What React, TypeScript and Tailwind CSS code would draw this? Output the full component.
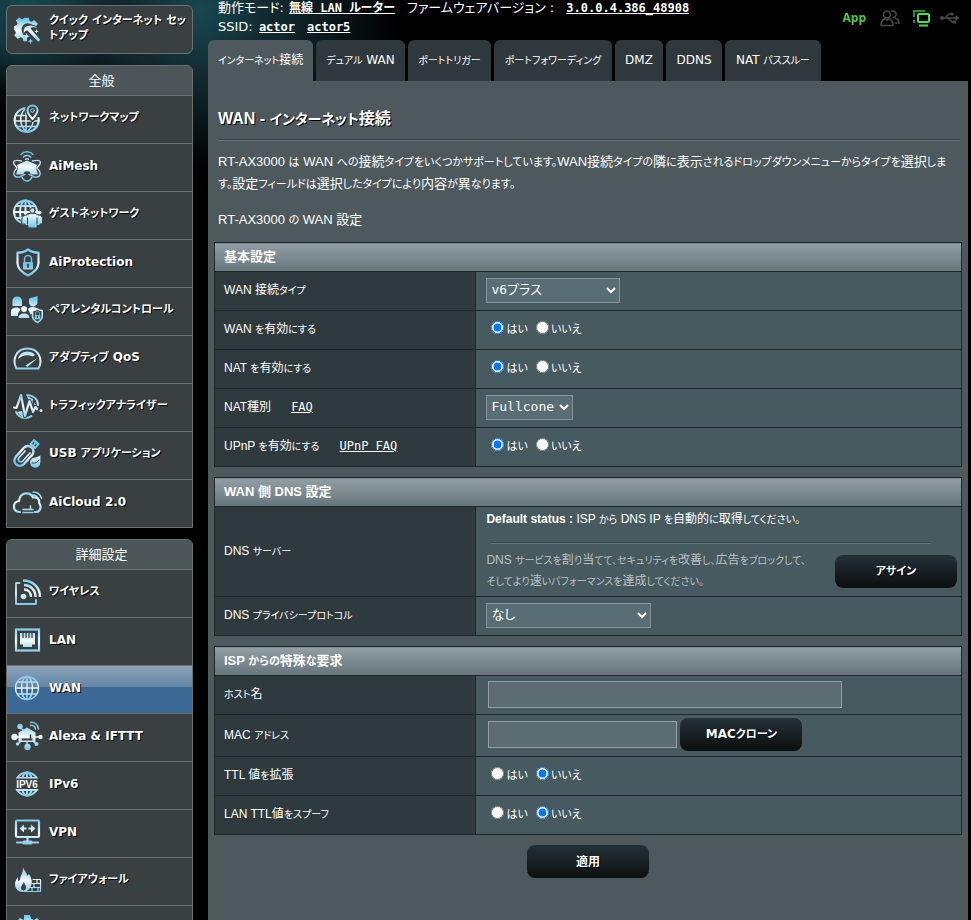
import type { ReactNode } from "react";

const SANS = "font-['Liberation_Sans','Noto_Sans_CJK_JP',sans-serif]";
const VERDANA = "font-['DejaVu_Sans','Noto_Sans_CJK_JP',sans-serif]";
const MONO = "font-['DejaVu_Sans_Mono','Noto_Sans_CJK_JP',monospace]";

// Kana are set one step smaller than the kanji and latin around them
function Ja({ children, size = "text-[11px]" }: { children: string; size?: string }) {
  return (
    <>
      {children.split(/([\u3001\u3002\u3040-\u30ff]+)/).map((part, i) =>
        i % 2 ? (
          <span key={i} className={size}>
            {part}
          </span>
        ) : (
          part
        )
      )}
    </>
  );
}

/* ---------- icons ---------- */

function Icon({ children }: { children: ReactNode }) {
  return (
    <svg
      viewBox="0 0 32 32"
      className="size-8 shrink-0"
      fill="none"
      stroke="url(#ice)"
      strokeWidth="1.6"
      strokeLinecap="round"
      strokeLinejoin="round"
      aria-hidden="true"
    >
      {children}
    </svg>
  );
}

const FILL = { fill: "url(#ice)", stroke: "none" };
const BG = "#3a4042";

const GEAR =
  "M11 2h5.500l.8 3.500 2.200 1 3-2 4 4-2 3-3.500-.5a7 7 0 1 0-8.500 10.500l2 2.500v4h-4l-1-3.500-2.300-1-3 2-4-4 2-3-1-2.200L0 15.500V11l3-.8 1-2.200-2-3L5.500 1.500 8.500 3.500 10.300 3z";

function GearWand() {
  return (
    <Icon>
      <g transform="translate(3 2) scale(.9)">
        <path d={GEAR} {...FILL} />
        <path d="M11.500 12c4-3 11-3.500 17.500 3-4.500-2-7.500-2.500-10-1.500L30 26.500 27 29.500 14.500 16.500c-1.500.5-2.500 1.500-4 4-1-4 0-6.500 1-8.500z" {...FILL} stroke={BG} strokeWidth="1.200" />
        <path d="M14 19l1 2.500 2.500 1-2.500 1-1 2.500-1-2.500-2.500-1 2.500-1zM18.500 25l.9 2 2.100 1-2.100 1-.9 2-.9-2-2.100-1 2.100-1zM25 14.500l.7 1.800 1.800.7-1.800.7-.7 1.800-.7-1.800-1.800-.7 1.800-.7z" {...FILL} />
      </g>
    </Icon>
  );
}

function Globe({ bold = false }: { bold?: boolean }) {
  return (
    <g strokeWidth={bold ? 2 : 1.4}>
      <circle cx="16" cy="16" r="11.500" />
      <ellipse cx="16" cy="16" rx="5.500" ry="11.500" />
      <path d="M16 4.500v23M4.500 16h23M6.500 10h19M6.500 22h19" />
    </g>
  );
}

function MapIcon() {
  return (
    <Icon>
      <path d="M16 6A12 12 0 1 0 27.500 16" strokeWidth="2.200" />
      <path d="M14 7c-6 6-6 16 1.500 23 4-3 6.500-6 6.500-11M5 13.500h12M4 19h24M6 24.500h20M15 7v23" strokeWidth="1.500" />
      <path d="M21.500 18c-4-5-5.500-7-5.500-9.500a5.500 5.500 0 0 1 11 0c0 2.500-1.500 4.500-5.500 9.500z" fill={BG} stroke={BG} strokeWidth="4" />
      <path d="M21.500 17c-4-4.500-5-6-5-8.500a5 5 0 0 1 10 0c0 2.500-1 4-5 8.500z" fill={BG} strokeWidth="2" />
      <circle cx="21.500" cy="8.500" r="1.800" fill={BG} strokeWidth="1" />
    </Icon>
  );
}

function MeshIcon() {
  return (
    <Icon>
      <path d="M16 10.500l10 4.500-1 3 2 6.500h-7.500c.5-4.500-7.500-4.500-7 0H5L7 18l-1-3z" {...FILL} />
      <path d="M10 4.500c3.300-3.600 8.700-3.600 12 0M12.300 7c2.200-2.200 5.200-2.200 7.400 0M14.500 9.300c1-.8 2-.8 3 0" strokeWidth="1.400" />
      <path d="M10.500 11C5 9.500 1.500 10.500 3 14l3 4c-5 5-4 10 3 9M21.500 11c5.500-1.500 9-.5 7.500 3l-3 4c5 5 4 10-3 9M9 26.500l5-2M23 26.500l-5-2" strokeWidth="1.300" />
      <path d="M11 27c1 2.500 3 4 5 4s4-1.500 5-4" strokeWidth="1.500" />
    </Icon>
  );
}

function GuestIcon() {
  return (
    <Icon>
      <g transform="translate(-1.500 -2)">
        <Globe bold />
      </g>
      <path d="M11 21c0-3 2-4 5-4 1-1 3-1.500 5.500-1.500S26 16 27 17c3 0 4.500 1 4.500 4v5H29v1.500h-3V30h-9v-2.500h-3V26h-3z" {...FILL} stroke={BG} strokeWidth="1" />
      <circle cx="14.500" cy="14.500" r="2" {...FILL} />
      <circle cx="21.500" cy="12.500" r="2.700" {...FILL} stroke={BG} strokeWidth="1" />
      <circle cx="28.500" cy="14.500" r="2" {...FILL} />
      <path d="M16.500 20v6M26 20v6" stroke={BG} strokeWidth="1" />
    </Icon>
  );
}

function Lock({ x, y, s = 1 }: { x: number; y: number; s?: number }) {
  return (
    <g transform={`translate(${x} ${y}) scale(${s})`}>
      <path d="M-3.500 0v-3a3.500 3.500 0 0 1 7 0v3" strokeWidth="1.500" />
      <rect x="-5" y="0" width="10" height="7.500" rx="1" {...FILL} />
      <path d="M0 2.500v2.500" stroke={BG} strokeWidth="1.800" />
    </g>
  );
}

function ShieldIcon() {
  return (
    <Icon>
      <path d="M17 3.500c3 2.200 6.500 3.200 10.500 3.200V17c0 6-4.500 9.500-10.500 12.500C11 26.500 6.500 23 6.500 17V6.700C10.500 6.700 14 5.700 17 3.500z" strokeWidth="2.200" />
      <Lock x={17} y={16} />
    </Icon>
  );
}

function FamilyIcon() {
  return (
    <Icon>
      <path d="M1.500 12V7c0-3 2-4.500 4.700-4.500S11 4 11 7v5zM18 4.500l8.500-2.500v5.500a4.400 4.400 0 0 1-8.500 2z" {...FILL} />
      <path d="M0 22v-5c0-2 2-3.500 5-3.500 2 0 4 .5 4.500 2L7 19.500V22zM17 15c1-1.500 3-2 5-2 3 0 5 1.500 5.500 3.500l-8 4z" {...FILL} />
      <circle cx="13" cy="15" r="3" {...FILL} />
      <path d="M7.500 24c0-3 2-4.500 5.500-4.500s5.500 1.500 5.500 4.500z" {...FILL} />
      <path d="M26.500 15c1.500 1.200 3 1.600 4.800 1.600V22c0 3-2.300 5-4.800 6.500-2.800-1.500-5-3.500-5-6.500v-5.400c1.500 0 3.500-.4 5-1.600z" fill={BG} />
      <Lock x={26.5} y={21} s={0.55} />
    </Icon>
  );
}

function GaugeIcon() {
  return (
    <Icon>
      <path d="M5.500 26.500c-5-9 0-20 11-20s16 11 11 20z" strokeWidth="2" />
      <path d="M7 17c1-4.500 4.500-7.500 9.500-7.500 3.500 0 6 1.500 7.500 3.500L21.500 14.500c-5-2.500-10-1.500-14.500 2.500z" {...FILL} />
      <path d="M14.500 23.500L26.500 16 16.500 25z" {...FILL} />
    </Icon>
  );
}

function TrafficIcon() {
  return (
    <Icon>
      <path d="M16 5c7 .5 11 4.500 11 10M5 22c1.500 3.500 5 6 9 6 3 0 5-.8 6.500-2" strokeWidth="1.800" />
      <path d="M16 6l6 3-1 6-3-3zM6 22l5-1 4 5-3 2zM23 12l3 5-2 2z" {...FILL} />
      <path d="M3 17.500l2.500.5 4.500-13 4 21 4.500-15 3.500 11 2.500-5 1.500 2" stroke={BG} strokeWidth="4" />
      <path d="M3 17.500l2.500.5 4.500-13 4 21 4.500-15 3.500 11 2.500-5 1.500 2" strokeWidth="2.200" />
      <circle cx="30" cy="20.500" r="1.500" {...FILL} />
    </Icon>
  );
}

function UsbStickIcon() {
  return (
    <Icon>
      <g transform="rotate(42 16 16)">
        <rect x="9.500" y="8" width="11" height="23" rx="5.500" strokeWidth="2.400" />
        <rect x="11" y="0" width="8" height="7" {...FILL} />
        <path d="M13.500 3v1.500M16.500 3v1.500" stroke={BG} strokeWidth="1.300" />
        <path d="M17.500 13v11c0 3.500-5 3.500-5 0v-9" strokeWidth="1.600" />
      </g>
      <path d="M30 16v8a5.800 5.800 0 1 1-9.500-4c3.500-1 7-1.500 9.500-4z" {...FILL} stroke={BG} strokeWidth="1.200" />
      <path d="M21 25c3.500.5 5.500-.5 7-3" stroke={BG} strokeWidth="1" />
    </Icon>
  );
}

function CloudIcon() {
  return (
    <Icon>
      <path d="M9 26H8c-7-1-6.500-10.500 0-11C9 6 19 5 22 11.500c4-1 7 2 6 5.500 3 3 1.500 9-3 9h-1" strokeWidth="2.200" />
      <path d="M12 23.500h10M12 26.500h10M19.500 20v3" strokeWidth="1.500" />
      <path d="M21 9c3 0 5.500 1.500 6.500 4.500M22 6c4 0 7 2 8.500 6" strokeWidth="1.500" />
    </Icon>
  );
}

function WifiIcon() {
  return (
    <Icon>
      <path d="M8.500 7H5v21h20v-4" strokeWidth="1.800" />
      <circle cx="12.500" cy="20.500" r="2.800" {...FILL} />
      <path d="M13 13.500c4 0 7 3 7 7.500M13 9c6.500 0 11.500 5 11.500 12M12 4.500c10 0 17 7 17 16.500" strokeWidth="2.400" strokeLinecap="butt" />
    </Icon>
  );
}

function LanIcon() {
  return (
    <Icon>
      <rect x="5" y="5.500" width="23" height="21" strokeWidth="2.200" strokeLinejoin="miter" />
      <path d="M9 9h15v11.500h-3V23h-9v-2.500H9z" {...FILL} />
      <path d="M12 8.500v5.500M15 8.500v5.500M18 8.500v5.500M21 8.500v5.500" stroke={BG} strokeWidth="1.300" strokeLinecap="butt" />
    </Icon>
  );
}

function AlexaIcon() {
  return (
    <Icon>
      <path d="M16 7.500l8.500 5V22h-17v-9.500z" {...FILL} />
      <path d="M10.500 18.500h11v2h-11z" fill={BG} stroke="none" />
      <path d="M19.500 15v4" stroke={BG} />
      <path d="M4 17h4M24 17h5M10 8l3 3M8 23l2-2M24 23l-2-2M16 22v4" strokeWidth="1.400" />
      <circle cx="3.500" cy="17" r="3.200" {...FILL} />
      <circle cx="29.500" cy="17" r="2.200" {...FILL} />
      <circle cx="9" cy="6.500" r="2.700" {...FILL} />
      <circle cx="6.500" cy="24" r="1.700" {...FILL} />
      <circle cx="25.500" cy="24" r="2" {...FILL} />
      <circle cx="16.500" cy="27" r="3.200" {...FILL} />
      <path d="M19.500 2.500c4-1 7.500 2 8 6.500M19.500 5.500c2.500-.5 4.500 1 5 3.500" strokeWidth="1.400" />
    </Icon>
  );
}

function Ipv6Icon() {
  return (
    <Icon>
      <Globe bold />
      <rect x="2" y="10.500" width="28" height="10.500" fill={BG} stroke="none" />
      <text
        x="16"
        y="19.500"
        textAnchor="middle"
        fontSize="10"
        fontWeight="700"
        stroke="none"
        fill="#f2f9fc"
        className="font-['Liberation_Sans',sans-serif] [text-shadow:none]"
      >
        IPV6
      </text>
    </Icon>
  );
}

function VpnIcon() {
  return (
    <Icon>
      <rect x="5" y="4.500" width="23" height="16.500" rx="1" strokeWidth="2.200" />
      <path d="M8.500 12.500l4.500-4v3h2.500v2H13v3zM24.500 12.500l-4.500-4v3h-2.500v2H20v3z" {...FILL} />
      <path d="M16.500 21v4M6 26.500h21" strokeWidth="2.200" />
      <rect x="11.500" y="24.500" width="10" height="4" rx="1.500" {...FILL} />
    </Icon>
  );
}

function FireIcon() {
  return (
    <Icon>
      <path d="M12 3c1 4 4 5 4 9l2-2c3 5 3.500 9 2 12-1.500 3.500-4 6-8 6-5 0-8-3.500-8-8 0-3 1.500-5 3-7v4l2-1c0-4 3-6 3-13z" {...FILL} />
      <path d="M12.500 17.500c2.500 3 3 4.500 3 6.500a3 3 0 0 1-6 0c0-2.500 2-3 3-6.500z" fill={BG} stroke="#e4f3fa" strokeWidth=".8" />
      <path d="M22 15.500h7.500V27.500H11M21 19.500h8.500M19 23.500h10.500M26 15.500v4M23 19.500v4M27 23.500v4M21 23.500v4" strokeWidth="1.200" />
    </Icon>
  );
}

function GearIcon() {
  return (
    <Icon>
      <path d="M13 3h6l1 3.500 3 1.500 3-2 4 4-2 3 1.500 3 3 1v6H3v-6l3-1 1-3-2-3 4-4 3.500 2L13 6.500z" {...FILL} />
    </Icon>
  );
}

/* ---------- sidebar ---------- */

type MenuItem = { label: string; icon: ReactNode; active?: boolean };

const general: MenuItem[] = [
  { label: "ネットワークマップ", icon: <MapIcon /> },
  { label: "AiMesh", icon: <MeshIcon /> },
  { label: "ゲストネットワーク", icon: <GuestIcon /> },
  { label: "AiProtection", icon: <ShieldIcon /> },
  { label: "ペアレンタルコントロール", icon: <FamilyIcon /> },
  { label: "アダプティブ QoS", icon: <GaugeIcon /> },
  { label: "トラフィックアナライザー", icon: <TrafficIcon /> },
  { label: "USB アプリケーション", icon: <UsbStickIcon /> },
  { label: "AiCloud 2.0", icon: <CloudIcon /> },
];

const advanced: MenuItem[] = [
  { label: "ワイヤレス", icon: <WifiIcon /> },
  { label: "LAN", icon: <LanIcon /> },
  { label: "WAN", icon: <Icon><Globe /></Icon>, active: true },
  { label: "Alexa & IFTTT", icon: <AlexaIcon /> },
  { label: "IPv6", icon: <Ipv6Icon /> },
  { label: "VPN", icon: <VpnIcon /> },
  { label: "ファイアウォール", icon: <FireIcon /> },
  { label: "", icon: <GearIcon /> },
];

const menuText = "text-xs font-bold text-white [text-shadow:1px_1px_0_#000]";

function Menu({ title, items }: { title: string; items: MenuItem[] }) {
  return (
    <nav className="overflow-hidden rounded-t-md border border-[#6b7071] bg-[#3a4042]">
      <h2 className="flex h-[29px] items-center justify-center bg-[#4c5558] pl-1 text-[13px] text-white">{title}</h2>
      {items.map((item) => (
        <a
          key={item.label}
          href="#"
          className={`flex h-12 items-center gap-1.5 border-t border-[#6b7071] pb-1 pl-1 ${menuText} ${
            item.active ? "bg-linear-to-b from-[#8ba2b8] from-0% via-[#6485a5] via-45% to-[#3b6894] to-45%" : ""
          }`}
        >
          {item.icon}
          <span>
            <Ja>{item.label}</Ja>
          </span>
        </a>
      ))}
    </nav>
  );
}

/* ---------- form pieces ---------- */

function Section({ title, children }: { title: string; children: ReactNode }) {
  return (
    <table className="w-full border-collapse border border-[#1f2729] text-xs text-white">
      <thead>
        <tr>
          <th
            colSpan={2}
            className="h-[29px] border border-[#1f2729] bg-linear-to-b from-[#92a0a5] to-[#66757c] px-[9px] py-0 text-left text-[13px] font-bold"
          >
            <Ja>{title}</Ja>
          </th>
        </tr>
      </thead>
      <tbody>{children}</tbody>
    </table>
  );
}

function Row({ label, link, height = "h-[39px]", children }: { label: string; link?: string; height?: string; children: ReactNode }) {
  return (
    <tr className={height}>
      <th className="w-[35%] border border-[#1f2729] bg-[#2f3a3e] px-[9px] pt-0 pb-0.5 text-left font-normal">
        <Ja size="text-[10px]">{label}</Ja>
        {link && (
          <a href="#" className={`ml-5 underline ${MONO}`}>
            {link}
          </a>
        )}
      </th>
      <td className="border border-[#1f2729] bg-[#475a5f] pt-0 pr-1 pb-0.5 pl-2.5">{children}</td>
    </tr>
  );
}

function YesNo({ name, value }: { name: string; value: "yes" | "no" }) {
  return (
    <div className="flex items-center gap-2 pl-[5px] text-[11px]">
      <label className="flex items-center gap-0.5">
        <input type="radio" name={name} defaultChecked={value === "yes"} className="mb-1 size-[13px]" />
        はい
      </label>
      <label className="flex items-center gap-0.5">
        <input type="radio" name={name} defaultChecked={value === "no"} className="mb-1 size-[13px]" />
        いいえ
      </label>
    </div>
  );
}

function Select({ label, value, width }: { label: string; value: string; width: string }) {
  return (
    <div className={`relative ${width}`}>
      <select
        aria-label={label}
        className={`block h-[25px] w-full appearance-none border border-[#869296] bg-[#596d74] pl-1 text-[13px] text-white ${MONO}`}
      >
        <option>{value}</option>
      </select>
      <svg viewBox="0 0 10 7" className="pointer-events-none absolute top-[9px] right-1 h-[7px] w-2.5" aria-hidden="true">
        <path d="M1 1l4 4 4-4" fill="none" stroke="#fff" strokeWidth="2" />
      </svg>
    </div>
  );
}

function Button({ children }: { children: string }) {
  return (
    <button
      type="button"
      className={`h-[33px] w-[122px] shrink-0 rounded-lg bg-linear-to-b from-[#233238] to-[#0d0f10] ${menuText} ${VERDANA}`}
    >
      <Ja>{children}</Ja>
    </button>
  );
}

const tabs = [
  { label: "インターネット接続", width: "w-[105px]" },
  { label: "デュアル WAN", width: "w-[89px]" },
  { label: "ポートトリガー", width: "w-[83px]" },
  { label: "ポートフォワーディング", width: "w-[118px]" },
  { label: "DMZ", width: "w-12" },
  { label: "DDNS", width: "w-14" },
  { label: "NAT パススルー", width: "w-24" },
];

const input = "h-[27px] border border-[#929ea1] bg-[#5b6d73] px-1 text-[13px] text-white";

export default function App() {
  return (
    <div
      lang="ja"
      className={`flex h-screen items-start gap-[15px] overflow-hidden bg-black bg-[radial-gradient(circle_at_30px_0px,#174850_0px,transparent_90px),radial-gradient(circle_at_200px_10px,#174850_0px,transparent_70px),radial-gradient(ellipse_200px_150px_at_200px_20px,#12282e_40%,transparent_100%),radial-gradient(ellipse_120px_110px_at_0px_0px,#12282e_40%,transparent_100%)] pr-[3px] pl-1.5 [font-feature-settings:'palt'] ${VERDANA}`}
    >
      <svg className="absolute size-0" aria-hidden="true">
        <linearGradient id="ice" gradientUnits="userSpaceOnUse" x1="0" y1="3" x2="0" y2="30">
          <stop offset="0" stopColor="#6fc4e6" />
          <stop offset=".5" stopColor="#f2f9fc" />
          <stop offset="1" stopColor="#6fc4e6" />
        </linearGradient>
      </svg>

      <aside className="flex w-[187px] shrink-0 flex-col gap-[11px] pt-[5px]">
        <a href="#" className={`flex h-[49px] items-center gap-1.5 rounded-md border border-[#6b7071] bg-[#3a4042] pl-1 ${menuText}`}>
          <GearWand />
          <span className="pb-1 leading-[15px]">
            <Ja>クイック インターネット セッ</Ja>
            <br />
            <Ja>トアップ</Ja>
          </span>
        </a>
        <Menu title="全般" items={general} />
        <Menu title="詳細設定" items={advanced} />
      </aside>

      <main className="min-w-0 flex-1 self-stretch">
        <header className="flex h-10 justify-between pl-2.5 text-[13px] text-white">
          <div className="-mt-0.5 leading-[19px]">
            <p>
              動作モード:{" "}
              <a href="#" className={`ml-px text-xs font-bold underline ${MONO}`}>無線 LAN ルーター</a>
              <span className="ml-3">ファームウェアバージョン :</span>{" "}
              <a href="#" className={`ml-2 text-xs font-bold underline ${MONO}`}>3.0.0.4.386_48908</a>
            </p>
            <p>
              SSID:{" "}
              <a href="#" className={`ml-0.5 text-xs font-bold underline ${MONO}`}>actor</a>
              <a href="#" className={`ml-3 text-xs font-bold underline ${MONO}`}>actor5</a>
            </p>
          </div>
          <div className="flex h-9 items-center pr-2">
            <a href="#" className="mr-3.5 font-['Open_Sans',sans-serif] text-xs font-bold text-[#4cc552]">App</a>
            <svg viewBox="0 0 20 18" className="mr-3 h-[18px] w-5" fill="none" stroke="#4a4a4a" strokeWidth="1.5" aria-label="ゲスト" role="img">
              <circle cx="7" cy="5.500" r="3.500" />
              <path d="M1 16.500c0-4 1.500-6 4-7l2 1.500 2-1.500c2.500 1 4 3 4 7zM11 2.500a3.300 3.300 0 1 1 2 6M14.500 9c3 .5 4.500 2 4.500 5h-4" />
            </svg>
            <svg viewBox="0 0 18 18" className="mr-2.5 h-[18px] w-[18px]" fill="none" stroke="#4fdc55" strokeWidth="2" aria-label="接続状態" role="img">
              <path d="M2 8V2h11" stroke="#2c8a30" />
              <path d="M2 11v3" stroke="#2c8a30" />
              <rect x="6" y="5" width="11" height="8" rx="1" />
              <path d="M7 16.500h9" />
            </svg>
            <svg viewBox="0 0 20 14" className="h-3.5 w-5" fill="none" stroke="#4a4a4a" strokeWidth="1.5" aria-label="USB" role="img">
              <path d="M2 7h14M5 7l4-4h3M8 7l4 4h2" />
              <circle cx="2" cy="7" r="2" fill="#4a4a4a" stroke="none" />
              <path d="M15.500 4v6l4-3z" fill="#4a4a4a" stroke="none" />
              <circle cx="12" cy="3" r="1.600" fill="#4a4a4a" stroke="none" />
              <path d="M13 9.500h3v3h-3z" fill="#4a4a4a" stroke="none" />
            </svg>
          </div>
        </header>

        <nav className="flex gap-[3px] text-xs text-white">
          {tabs.map((tab, i) => (
            <a
              key={tab.label}
              href="#"
              className={`flex h-[41px] items-center justify-center whitespace-pre rounded-t-md pb-0.5 ${tab.width} ${
                i === 0 ? "bg-[#4d595d]" : "bg-[#2f383d]"
              }`}
            >
              <span>
                <Ja size="text-[10px]">{tab.label}</Ja>
              </span>
            </a>
          ))}
        </nav>

        <div className={`min-h-full bg-[#4d595d] px-1.5 pt-7 text-[13px] text-white ${SANS}`}>
          <div className="pr-0.5 pl-1">
            <h1 className="border-b border-[#374145] pb-2.5 text-base leading-5 font-bold [text-shadow:1px_1px_0_#000]">
              <Ja size="text-sm">WAN - インターネット接続</Ja>
            </h1>
            <div className="border-t border-[#68757a] pt-2.5">
              <p className="leading-[22px]">
                <Ja>
                  RT-AX3000 は WAN への接続タイプをいくつかサポートしています。WAN接続タイプの隣に表示されるドロップダウンメニューからタイプを選択しま
                </Ja>
                <br />
                <Ja>す。設定フィールドは選択したタイプにより内容が異なります。</Ja>
              </p>
              <p className="mt-3.5 leading-[22px]">
                <Ja>RT-AX3000 の WAN 設定</Ja>
              </p>
            </div>
          </div>

          <form className="mt-[11px] flex flex-col items-center gap-2.5" onSubmit={(e) => e.preventDefault()}>
            <Section title="基本設定">
              <Row label="WAN 接続タイプ">
                <Select label="WAN 接続タイプ" value="v6プラス" width="w-[134px]" />
              </Row>
              <Row label="WAN を有効にする">
                <YesNo name="wan" value="yes" />
              </Row>
              <Row label="NAT を有効にする">
                <YesNo name="nat" value="yes" />
              </Row>
              <Row label="NAT種別" link="FAQ">
                <Select label="NAT種別" value="Fullcone" width="w-[87px]" />
              </Row>
              <Row label="UPnP を有効にする" link="UPnP FAQ">
                <YesNo name="upnp" value="yes" />
              </Row>
            </Section>

            <Section title="WAN 側 DNS 設定">
              <Row label="DNS サーバー" height="h-[90px]">
                <p className="leading-5">
                  <b>Default status :</b> <Ja size="text-[10px]">ISP から DNS IP を自動的に取得してください。</Ja>
                </p>
                <hr className="mt-3 mr-[26px] ml-[5px] h-0.5 border-t border-b border-t-[#36454a] border-b-[#64757a]" />
                <div className="mt-1.5 flex items-center justify-between">
                  <p className="leading-[21px] text-[#b9c1c4]">
                    <Ja size="text-[10px]">DNS サービスを割り当てて、セキュリティを改善し、広告をブロックして、</Ja>
                    <br />
                    <Ja size="text-[10px]">そしてより速いパフォーマンスを達成してください。</Ja>
                  </p>
                  <Button>アサイン</Button>
                </div>
              </Row>
              <Row label="DNS プライバシープロトコル">
                <Select label="DNS プライバシープロトコル" value="なし" width="w-[165px]" />
              </Row>
            </Section>

            <Section title="ISP からの特殊な要求">
              <Row label="ホスト名">
                <input type="text" aria-label="ホスト名" className={`ml-0.5 block w-[354px] ${input}`} />
              </Row>
              <Row label="MAC アドレス" height="h-[42px]">
                <div className="flex items-center gap-[3px] pl-0.5">
                  <input type="text" aria-label="MAC アドレス" className={`w-[189px] ${input}`} />
                  <Button>MACクローン</Button>
                </div>
              </Row>
              <Row label="TTL 値を拡張">
                <YesNo name="ttl" value="no" />
              </Row>
              <Row label="LAN TTL値をスプーフ">
                <YesNo name="spoof" value="no" />
              </Row>
            </Section>

            <Button>適用</Button>
          </form>
        </div>
      </main>
    </div>
  );
}
